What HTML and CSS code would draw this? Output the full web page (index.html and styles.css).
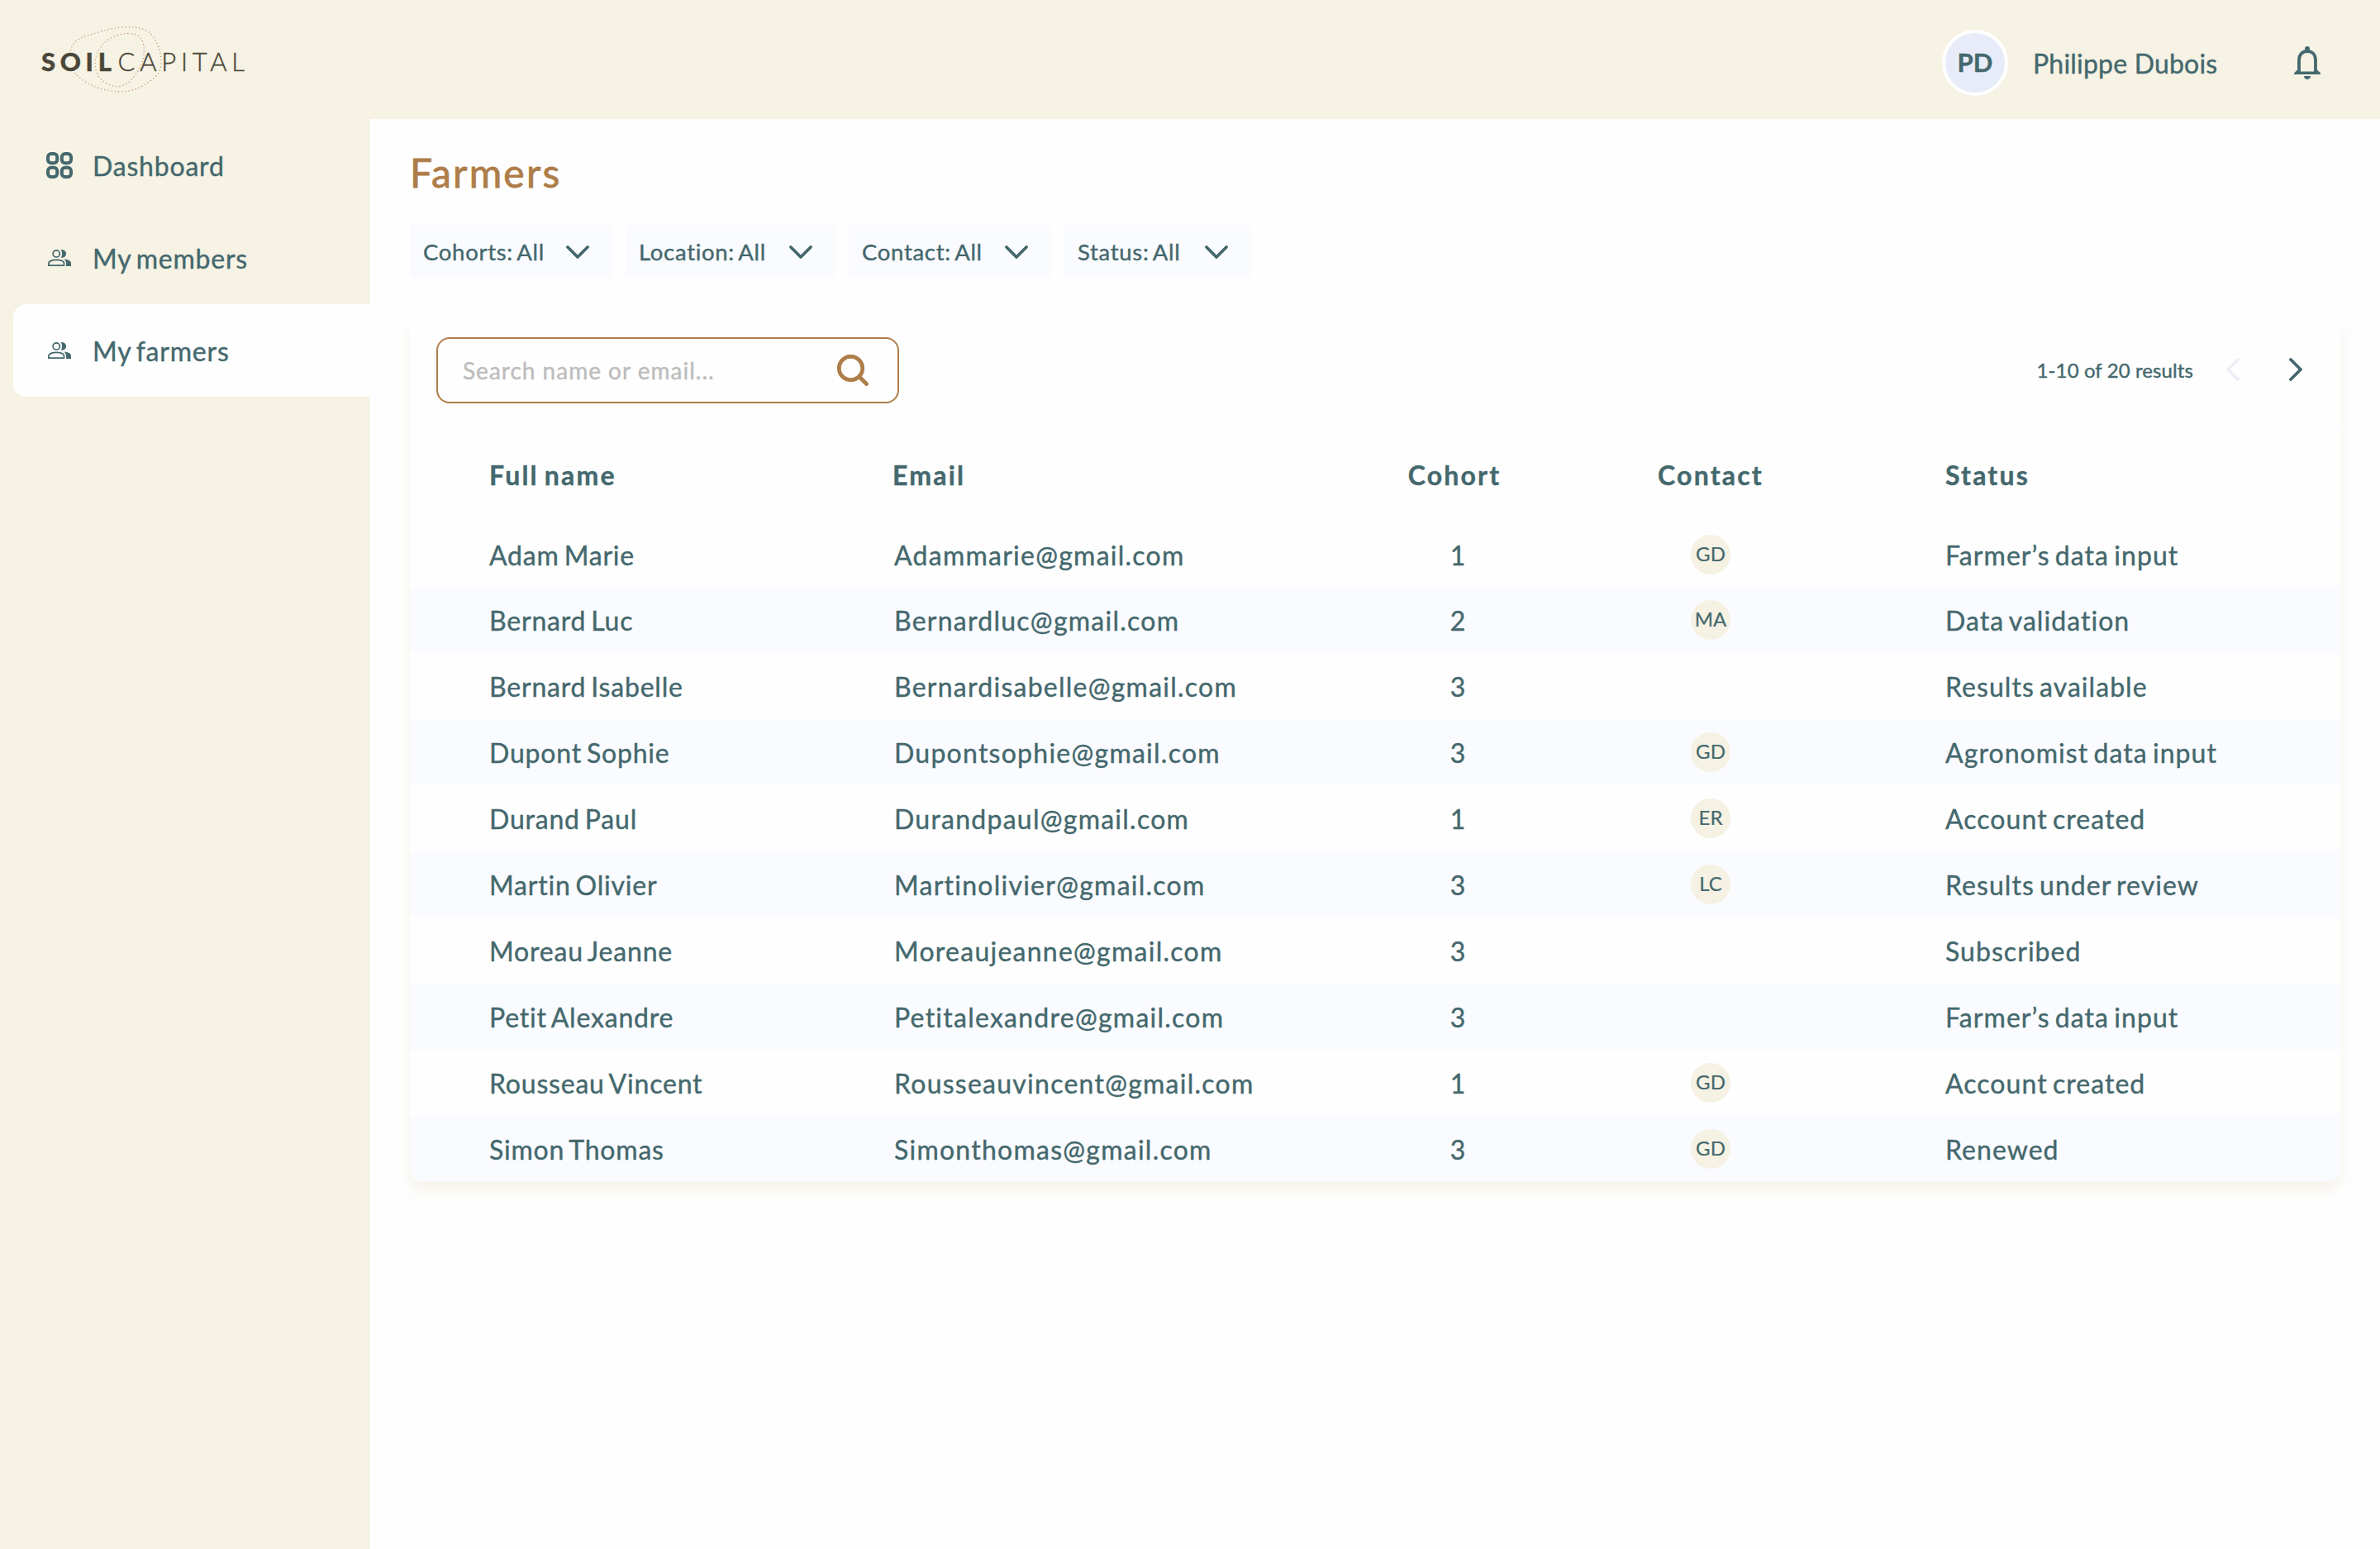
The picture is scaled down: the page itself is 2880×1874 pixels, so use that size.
FILE: index.html
```
<!DOCTYPE html>
<html lang="en">
	<head>
		<meta charset="utf-8">
		<title>Soil Capital - Farmers</title>
		<link rel="stylesheet" href="styles.css">
	</head>
	<body>
		<header class="header">
			<div class="logo">
				<span class="logo-bold">SOIL</span><span class="logo-thin">CAPITAL</span>
				<svg class="logo-rings" viewBox="0 0 480 300">
					<path d="M137 122C142 92 168 78 200 68C245 56 290 38 345 38C395 38 425 52 440 78C455 105 464 130 465 165C466 200 452 214 425 234C390 262 350 274 310 273C250 268 190 250 150 202"/>
					<path d="M345 61C385 61 402 82 403 120C404 160 385 205 350 235C330 254 310 258 285 250C250 238 226 215 225 170C225 115 275 63 345 61Z"/>
				</svg>
			</div>
			<div class="user">
				<div class="avatar">PD</div>
				<div class="user-name">Philippe Dubois</div>
				<svg class="bell" viewBox="0 0 32 40">
					<circle cx="16" cy="3" r="3"/>
					<path class="bell-body" d="M6 31V17C6 10 10 6 16 6S26 10 26 17V31"/>
					<path d="M4 28.500L0 32.500V34H32V32.500L28 28.500V30.500H4Z"/>
					<path d="M12 36H20C20 38.500 18 40 16 40S12 38.500 12 36Z"/>
				</svg>
			</div>
		</header>

		<div class="layout">
			<nav class="sidebar">
				<a class="nav-item">
					<svg class="icon-grid" viewBox="0 0 32 32">
						<rect x="2" y="2" width="11.200" height="11.200" rx="4"/>
						<rect x="18.800" y="2" width="11.200" height="11.200" rx="4"/>
						<rect x="2" y="18.800" width="11.200" height="11.200" rx="4"/>
						<rect x="18.800" y="18.800" width="11.200" height="11.200" rx="4"/>
					</svg>
					<span>Dashboard</span>
				</a>
				<a class="nav-item">
					<svg class="icon-people" viewBox="0 0 28 20">
						<circle class="line" cx="10.200" cy="4.900" r="4.100"/>
						<path class="line" d="M.8 19.200V16.800C.8 13.600 6 12.300 10.200 12.300S19.500 13.600 19.500 16.800V19.200Z"/>
						<path d="M15.600 0C19.500-.3 22 2 22 4.900S19.500 10 15.600 9.700C17.600 7 17.600 3 15.600 0Z"/>
						<path d="M19.400 11.400C24.500 11.600 28 13.400 28 16.600V20H22V17C22 14.500 21 12.700 19.400 11.400Z"/>
					</svg>
					<span>My members</span>
				</a>
				<a class="nav-item active">
					<svg class="icon-people" viewBox="0 0 28 20">
						<circle class="line" cx="10.200" cy="4.900" r="4.100"/>
						<path class="line" d="M.8 19.200V16.800C.8 13.600 6 12.300 10.200 12.300S19.500 13.600 19.500 16.800V19.200Z"/>
						<path d="M15.600 0C19.500-.3 22 2 22 4.900S19.500 10 15.600 9.700C17.600 7 17.600 3 15.600 0Z"/>
						<path d="M19.400 11.400C24.500 11.600 28 13.400 28 16.600V20H22V17C22 14.500 21 12.700 19.400 11.400Z"/>
					</svg>
					<span>My farmers</span>
				</a>
			</nav>

			<main class="content">
				<h1>Farmers</h1>

				<div class="filters">
					<div class="filter">Cohorts: All <svg class="chevron" viewBox="0 0 28 16"><path d="M2 2L14 14L26 2"/></svg></div>
					<div class="filter">Location: All <svg class="chevron" viewBox="0 0 28 16"><path d="M2 2L14 14L26 2"/></svg></div>
					<div class="filter">Contact: All <svg class="chevron" viewBox="0 0 28 16"><path d="M2 2L14 14L26 2"/></svg></div>
					<div class="filter">Status: All <svg class="chevron" viewBox="0 0 28 16"><path d="M2 2L14 14L26 2"/></svg></div>
				</div>

				<section class="card">
					<div class="toolbar">
						<div class="search">
							<span>Search name or email...</span>
							<svg class="icon-search" viewBox="0 0 38 38">
								<circle cx="16.500" cy="16.500" r="14.200"/>
								<path d="M27 27L35.500 35.500"/>
							</svg>
						</div>
						<div class="pagination">
							<span>1-10 of 20 results</span>
							<svg class="arrow disabled" viewBox="0 0 16 28"><path d="M14 2L2 14L14 26"/></svg>
							<svg class="arrow" viewBox="0 0 16 28"><path d="M2 2L14 14L2 26"/></svg>
						</div>
					</div>

					<table>
						<thead>
							<tr>
								<th class="col-name">Full name</th>
								<th class="col-email">Email</th>
								<th class="col-cohort">Cohort</th>
								<th class="col-contact">Contact</th>
								<th class="col-status">Status</th>
							</tr>
						</thead>
						<tbody>
							<tr><td class="col-name">Adam Marie</td><td class="col-email">Adammarie@gmail.com</td><td class="col-cohort">1</td><td class="col-contact"><span class="badge">GD</span></td><td class="col-status">Farmer’s data input</td></tr>
							<tr><td class="col-name">Bernard Luc</td><td class="col-email">Bernardluc@gmail.com</td><td class="col-cohort">2</td><td class="col-contact"><span class="badge">MA</span></td><td class="col-status">Data validation</td></tr>
							<tr><td class="col-name">Bernard Isabelle</td><td class="col-email">Bernardisabelle@gmail.com</td><td class="col-cohort">3</td><td class="col-contact"></td><td class="col-status">Results available</td></tr>
							<tr><td class="col-name">Dupont Sophie</td><td class="col-email">Dupontsophie@gmail.com</td><td class="col-cohort">3</td><td class="col-contact"><span class="badge">GD</span></td><td class="col-status">Agronomist data input</td></tr>
							<tr><td class="col-name">Durand Paul</td><td class="col-email">Durandpaul@gmail.com</td><td class="col-cohort">1</td><td class="col-contact"><span class="badge">ER</span></td><td class="col-status">Account created</td></tr>
							<tr><td class="col-name">Martin Olivier</td><td class="col-email">Martinolivier@gmail.com</td><td class="col-cohort">3</td><td class="col-contact"><span class="badge">LC</span></td><td class="col-status">Results under review</td></tr>
							<tr><td class="col-name">Moreau Jeanne</td><td class="col-email">Moreaujeanne@gmail.com</td><td class="col-cohort">3</td><td class="col-contact"></td><td class="col-status">Subscribed</td></tr>
							<tr><td class="col-name">Petit Alexandre</td><td class="col-email">Petitalexandre@gmail.com</td><td class="col-cohort">3</td><td class="col-contact"></td><td class="col-status">Farmer’s data input</td></tr>
							<tr><td class="col-name">Rousseau Vincent</td><td class="col-email">Rousseauvincent@gmail.com</td><td class="col-cohort">1</td><td class="col-contact"><span class="badge">GD</span></td><td class="col-status">Account created</td></tr>
							<tr><td class="col-name">Simon Thomas</td><td class="col-email">Simonthomas@gmail.com</td><td class="col-cohort">3</td><td class="col-contact"><span class="badge">GD</span></td><td class="col-status">Renewed</td></tr>
						</tbody>
					</table>
				</section>
			</main>
		</div>
	</body>
</html>
```

FILE: styles.css
```
*{
	box-sizing:border-box;
}

body{
	margin:0;
	height:1874px;
	display:flex;
	flex-direction:column;
	background-color:#fefefe;
	color:#44686d;
	font-family:Lato, "Open Sans", sans-serif;
	font-size:32px;
	-webkit-text-stroke:.4px;
}

svg{
	display:block;
	flex:none;
	fill:#44686d;
}

/* header */
.header{
	height:144px;
	flex:none;
	display:flex;
	justify-content:space-between;
	align-items:center;
	padding:0 72px 0 50px;
	background-color:#f6f2e4;
}

.logo{
	position:relative;
	display:flex;
	font-size:31px;
	line-height:40px;
	letter-spacing:5.7px;
	padding-top:3px;
	color:#4b4738;
}

.logo-bold{
	font-weight:900;
}

.logo-thin{
	font-weight:300;
	padding-left:2px;
}

.logo-rings{
	position:absolute;
	left:-10px;
	top:-31px;
	width:160px;
	height:100px;
	fill:none;
	stroke:#b58a5a;
	stroke-width:4;
	stroke-linecap:round;
	stroke-dasharray:0 12.6;
}

.user{
	display:flex;
	align-items:center;
	padding-top:8px;
}

.avatar{
	width:80px;
	height:80px;
	border:4px solid #fff;
	border-radius:50%;
	background-color:#e8ecf9;
	text-align:center;
	font-size:31px;
	font-weight:bold;
	line-height:70px;
}

.user-name{
	margin-left:30px;
	padding-top:1px;
	width:316px;
	letter-spacing:.2px;
}

.bell{
	width:32px;
	height:40px;
}

.bell .bell-body{
	fill:none;
	stroke:#44686d;
	stroke-width:3.8;
}

.layout{
	flex:1;
	display:flex;
}

/* sidebar */
.sidebar{
	width:448px;
	padding-left:16px;
	background-color:#f6f2e4;
}

.nav-item{
	height:112px;
	display:flex;
	align-items:center;
	padding-left:40px;
	letter-spacing:.8px;
	word-spacing:-3px;
}

.nav-item span{
	padding-top:1px;
}

.nav-item.active{
	background-color:#fefefe;
	border-radius:16px 0 0 16px;
}

.icon-grid{
	width:32px;
	height:32px;
	margin-right:24px;
	fill:none;
	stroke:#44686d;
	stroke-width:4;
}

.icon-people{
	width:28px;
	height:20px;
	margin:0 26px 0 2px;
}

.icon-people .line{
	fill:none;
	stroke:#44686d;
	stroke-width:1.7;
}

/* content */
.content{
	flex:1;
	padding:35px 48px 0 48px;
}

h1{
	margin:0;
	height:93px;
	line-height:60px;
	font-size:48px;
	font-weight:normal;
	letter-spacing:2.2px;
	color:#ae7d49;
	-webkit-text-stroke:.8px;
}

.filters{
	display:flex;
	gap:16px;
}

.filter{
	width:245px;
	height:64px;
	display:flex;
	align-items:center;
	justify-content:space-between;
	padding:0 28px 0 16px;
	background-color:#fafbff;
	font-size:27.500px;
	letter-spacing:.7px;
	word-spacing:-2.500px;
}

.filter:nth-child(2){
	width:254px;
}

.filter:nth-child(4){
	width:226px;
}

.chevron{
	width:28px;
	height:16px;
	margin-top:2px;
}

.chevron, .arrow{
	fill:none;
	stroke:#44686d;
	stroke-width:3.8;
	stroke-linecap:round;
	stroke-linejoin:round;
}

.card{
	width:2336px;
	margin-top:48px;
	border-radius:16px;
	overflow:hidden;
	box-shadow:0 10px 18px rgba(190, 165, 100, .13);
}

.toolbar{
	height:136px;
	display:flex;
	justify-content:space-between;
	align-items:flex-start;
	padding:24px 46px 0 32px;
	border-bottom:3px solid #fbfcff;
}

.search{
	width:560px;
	height:80px;
	display:flex;
	justify-content:space-between;
	align-items:center;
	padding:0 35px 0 30px;
	border:2px solid #ae7d49;
	border-radius:16px;
	color:#bcbcbc;
	font-size:28px;
	letter-spacing:1px;
}

.icon-search{
	width:38px;
	height:38px;
	fill:none;
	stroke:#ae7d49;
	stroke-width:4.8;
	stroke-linecap:round;
}

.pagination{
	height:78px;
	display:flex;
	align-items:center;
	font-size:24px;
	letter-spacing:.1px;
}

.arrow{
	width:16px;
	height:28px;
	margin-left:60px;
}

.arrow.disabled{
	margin-left:40px;
	stroke:#ecedf6;
}

/* farmers table */
table{
	width:100%;
	table-layout:fixed;
	border-collapse:collapse;
}

th, td{
	padding:2px 0 0;
	height:80px;
	text-align:left;
	line-height:40px;
	letter-spacing:.8px;
	word-spacing:-3px;
}

th{
	height:110px;
	padding-top:0;
	border-bottom:2px solid #fbfcff;
	letter-spacing:2.2px;
}

tbody tr:nth-child(even){
	background-color:#fafbff;
}

.col-name{
	width:584px;
	padding-left:96px;
}

.col-email{
	width:480px;
}

td.col-email{
	padding-left:2px;
	letter-spacing:1.25px;
}

.col-cohort{
	width:400px;
	text-align:center;
}

td.col-cohort{
	padding-left:9px;
}

.col-contact{
	width:220px;
	text-align:center;
}

td.col-contact{
	padding-top:0;
}

.col-status{
	padding-left:174px;
}

td.col-status{
	letter-spacing:1.05px;
}

.badge{
	display:block;
	width:48px;
	height:48px;
	margin:0 auto;
	border-radius:50%;
	background-color:#f5f1e3;
	font-size:24px;
	line-height:46px;
	letter-spacing:0;
	-webkit-text-stroke:.2px;
}
```
